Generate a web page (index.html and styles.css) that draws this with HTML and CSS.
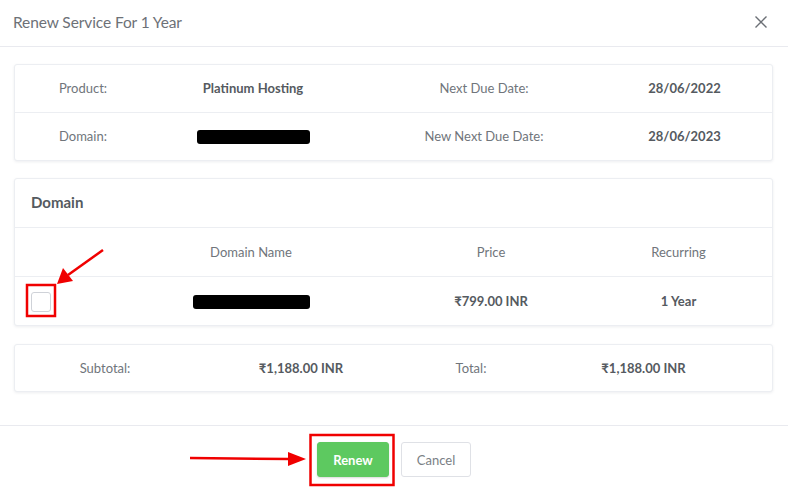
FILE: index.html
```
<!DOCTYPE html>
<html>
<head>
<meta charset="utf-8">
<link rel="stylesheet" href="styles.css">
</head>
<body>
<div class="modal">
  <div class="modal-header">
    <span class="modal-title">Renew Service For 1 Year</span>
    <svg class="close" width="14" height="14" viewBox="0 0 14 14"><path d="M1.5 1.5 L12.5 12.5 M12.5 1.5 L1.5 12.5" stroke="#6b6f75" stroke-width="1.4" fill="none"/></svg>
  </div>
  <div class="modal-body">
    <div class="card info">
      <div class="row r4 first">
        <div class="lbl">Product:</div>
        <div class="val">Platinum Hosting</div>
        <div class="lbl">Next Due Date:</div>
        <div class="val v4">28/06/2022</div>
      </div>
      <div class="row r4 sep">
        <div class="lbl">Domain:</div>
        <div class="val"><span class="redact r1"></span></div>
        <div class="lbl">New Next Due Date:</div>
        <div class="val v4">28/06/2023</div>
      </div>
    </div>

    <div class="card domain">
      <div class="card-head">Domain</div>
      <div class="row rd sep">
        <div></div>
        <div class="lbl">Domain Name</div>
        <div class="lbl">Price</div>
        <div class="lbl">Recurring</div>
      </div>
      <div class="row rd sep">
        <div class="chk-cell"><span class="checkbox"></span></div>
        <div class="val"><span class="redact r2"></span></div>
        <div class="val">₹799.00 INR</div>
        <div class="val">1 Year</div>
      </div>
    </div>

    <div class="card totals">
      <div class="row rt">
        <div class="lbl">Subtotal:</div>
        <div class="val">₹1,188.00 INR</div>
        <div class="lbl">Total:</div>
        <div class="val vt">₹1,188.00 INR</div>
      </div>
    </div>
  </div>
  <div class="modal-footer">
    <button class="btn btn-renew">Renew</button>
    <button class="btn btn-cancel">Cancel</button>
  </div>

  <svg class="annot" width="788" height="493" viewBox="0 0 788 493">
    <rect x="27" y="285" width="28" height="31" fill="none" stroke="#f00000" stroke-width="2.5"/>
    <line x1="103" y1="250" x2="68" y2="275" stroke="#f00000" stroke-width="2.5"/>
    <polygon points="57,284 63,268 73,281" fill="#f00000"/>
    <rect x="310.5" y="435" width="83" height="50" fill="none" stroke="#f00000" stroke-width="2.5"/>
    <line x1="190" y1="458" x2="290" y2="459" stroke="#f00000" stroke-width="2.5"/>
    <polygon points="306,459 288,452 288,466" fill="#f00000"/>
  </svg>
</div>
</body>
</html>
```
FILE: styles.css
```
* { box-sizing: border-box; }
html, body { margin: 0; padding: 0; background: #fff; }
body {
  font-family: Lato, "Open Sans", "Liberation Sans", sans-serif;
  font-size: 13px;
  color: #555a60;
  width: 788px;
  height: 493px;
  overflow: hidden;
}
.modal { position: relative; width: 788px; height: 493px; }
.modal-header {
  height: 47px;
  padding: 0 20px 0 13px;
  display: flex;
  align-items: center;
  justify-content: space-between;
  border-bottom: 1px solid #e9eaef;
}
.modal-title { font-size: 15.5px; color: #6d7177; letter-spacing: -0.1px; margin-top: -2px; }
.close { margin-top: -2px; }
.modal-body { padding: 17px 15px 33px 14px; display: flex; flex-direction: column; gap: 17px; }
.card {
  border: 1px solid #eceef2;
  border-radius: 3px;
  box-shadow: 0 1px 3px rgba(30, 40, 70, 0.08);
  background: #fff;
}
.row { display: grid; height: 48px; align-items: center; text-align: center; padding-bottom: 1px; }
.row.first { height: 47px; }
.sep { border-top: 1px solid #eceef2; }
.r4 { grid-template-columns: 136px 204px 258px 1fr; }
.v4 { padding-right: 16px; }
.rd { grid-template-columns: 90px 292px 188px 1fr; height: 49px; }
.totals { margin-top: 1px; }
.rt { grid-template-columns: 180px 212px 128px 1fr; height: 46px; }
.vt { padding-right: 20px; }
.lbl { color: #70757b; }
.val { font-weight: 700; color: #555a60; }
.card-head {
  height: 48px;
  display: flex;
  align-items: center;
  padding-left: 16px;
  padding-bottom: 2px;
  font-size: 15px;
  font-weight: 700;
  color: #555a60;
}
.chk-cell { display: flex; justify-content: flex-start; padding-left: 16px; padding-top: 2px; }
.checkbox {
  width: 20px; height: 20px;
  border: 1px solid #cfd2d8;
  border-radius: 3px;
  background: #fff;
  display: block;
}
.redact { display: inline-block; background: #000; border-radius: 3px; height: 14px; vertical-align: middle; }
.r1 { width: 113px; }
.r2 { width: 117px; }
.modal-footer {
  border-top: 1px solid #e9eaef;
  padding-top: 16px;
  display: flex;
  justify-content: center;
  gap: 12px;
}
.btn {
  height: 35px;
  font-family: inherit;
  font-size: 13px;
  border-radius: 3px;
  padding: 0;
}
.btn-renew { width: 72px; background: #5dc960; color: #fff; border: 1px solid #5dc960; font-weight: 700; box-shadow: 0 1px 2px rgba(0,0,0,0.15); }
.btn-cancel { width: 70px; background: #fff; color: #7a7f85; border: 1px solid #dfe1e6; }
.annot { position: absolute; left: 0; top: 0; pointer-events: none; }
```
